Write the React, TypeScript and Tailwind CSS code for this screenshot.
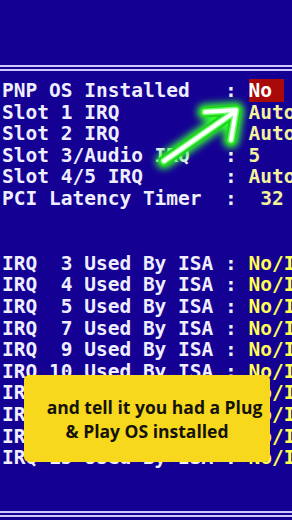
const topRows: { label: string; value: string; hot?: boolean }[] = [
  { label: 'PNP OS Installed   : ', value: 'No ', hot: true },
  { label: 'Slot 1 IRQ         : ', value: 'Auto' },
  { label: 'Slot 2 IRQ         : ', value: 'Auto' },
  { label: 'Slot 3/Audio IRQ   : ', value: '5' },
  { label: 'Slot 4/5 IRQ       : ', value: 'Auto' },
  { label: 'PCI Latency Timer  : ', value: ' 32' },
];

const irqs = ['3', '4', '5', '7', '9', '10', '11', '12', '14', '15'];

const Row = ({ children }: { children: React.ReactNode }) => (
  <div className="h-[21.6px] leading-[21.6px] whitespace-pre pl-[2px]">{children}</div>
);

const DoubleLine = () => (
  <div className="flex flex-col gap-[2px]">
    <div className="h-[2px] bg-[#cfc8ff]" />
    <div className="h-[2px] bg-[#cfc8ff]" />
  </div>
);

const arrow = 'M164 161 L233 113 M205 112 L236 110 L231 140';

export default function App() {
  return (
    <div className="relative w-[292px] h-[520px] overflow-hidden bg-[#150094] flex flex-col">
      <div className="h-[65px]" />
      <DoubleLine />
      <div
        className="mt-[9px] text-[19.5px] font-bold text-[#eeeeff]"
        style={{ fontFamily: '"DejaVu Sans Mono", "Liberation Mono", monospace' }}
      >
        {topRows.map((r) => (
          <Row key={r.label}>
            {r.label}
            {r.hot ? (
              <span className="bg-[#a80a0a] text-white">{r.value}</span>
            ) : (
              <span className="text-[#f3f39a]">{r.value}</span>
            )}
          </Row>
        ))}
        <Row> </Row>
        <Row> </Row>
        {irqs.map((n) => (
          <Row key={n}>
            {'IRQ ' + n.padStart(2, ' ') + ' Used By ISA : '}
            <span className="text-[#ffff55]">No/ICU</span>
          </Row>
        ))}
      </div>
      <div className="flex-1" />
      <div className="mb-[3px]">
        <DoubleLine />
      </div>

      <svg className="absolute left-0 top-0" width="292" height="520" viewBox="0 0 292 520">
        <defs>
          <filter id="glow" x="-50%" y="-50%" width="200%" height="200%">
            <feGaussianBlur stdDeviation="3.5" />
          </filter>
        </defs>
        <g fill="none" strokeLinecap="round" strokeLinejoin="round">
          <path d={arrow} stroke="#30ff30" strokeWidth="16" filter="url(#glow)" />
          <path d={arrow} stroke="#1fd01f" strokeWidth="11" />
          <path d={arrow} stroke="#62ff62" strokeWidth="7" />
          <path d={arrow} stroke="#ffffff" strokeWidth="4" />
        </g>
      </svg>

      <div className="absolute left-[24px] top-[375px] w-[246px] h-[87px] rounded-[5px] bg-[#f7d81c] flex flex-col items-center justify-center">
        <div
          className="text-[17.5px] font-bold leading-[24px] text-[#141209] text-center"
          style={{ fontFamily: '"Open Sans", "Noto Sans", sans-serif' }}
        >
          <div className="pl-[15px]">and tell it you had a Plug</div>
          <div>&amp; Play OS installed</div>
        </div>
      </div>
    </div>
  );
}
